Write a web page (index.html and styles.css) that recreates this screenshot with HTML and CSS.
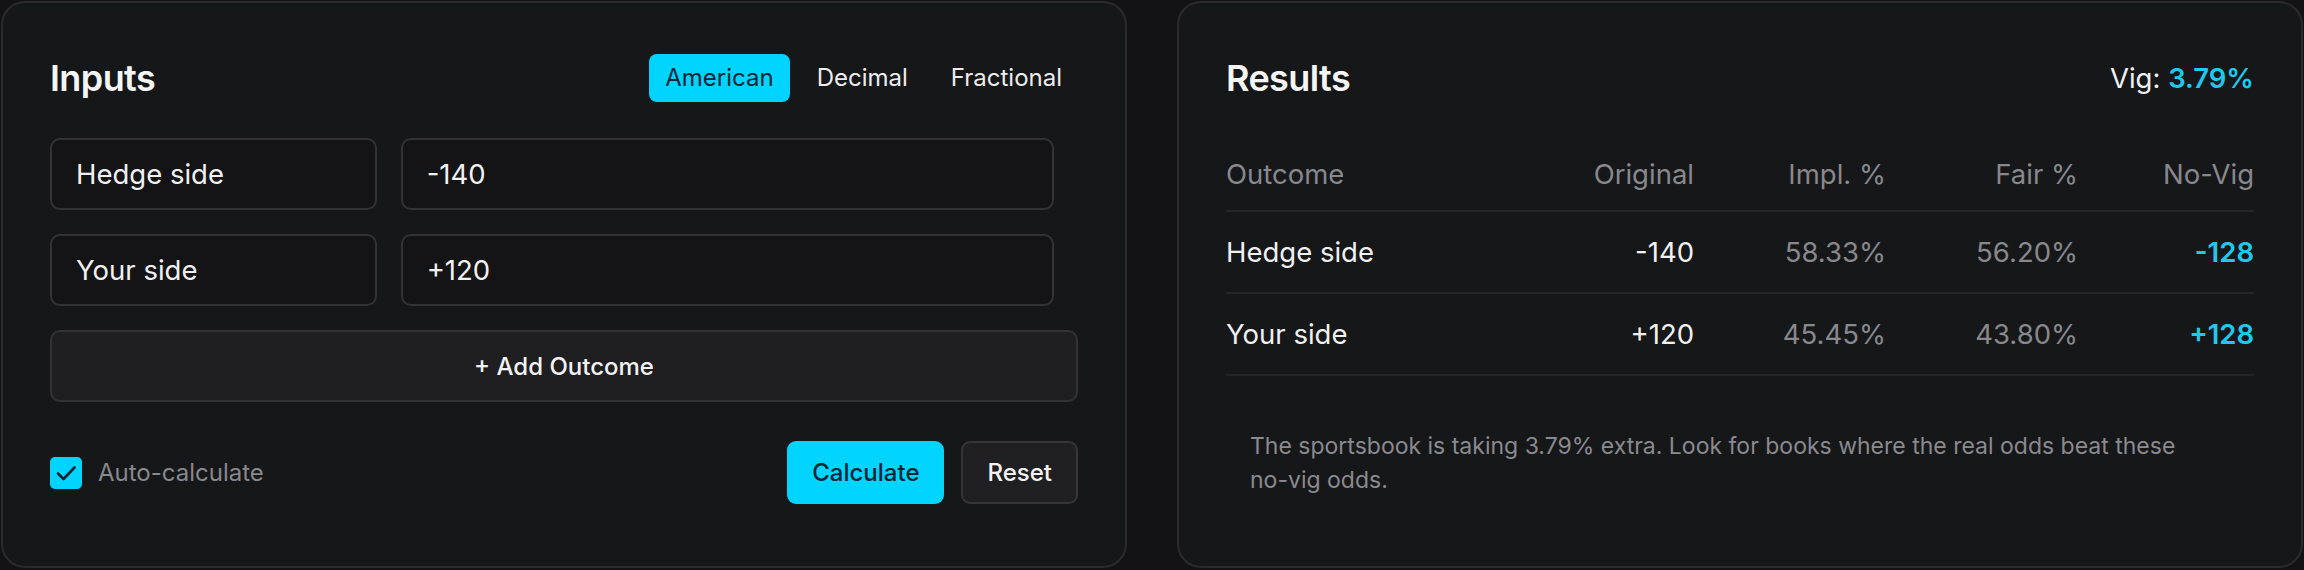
FILE: index.html
```html
<!DOCTYPE html>
<html lang="en">
<head>
<meta charset="utf-8">
<title>No-Vig Calculator</title>
<link rel="stylesheet" href="styles.css">
</head>
<body>
<main class="page">
  <section class="card inputs">
    <div class="card-head">
      <h2 class="title">Inputs</h2>
      <div class="toggle">
        <button class="tog active">American</button>
        <button class="tog">Decimal</button>
        <button class="tog">Fractional</button>
      </div>
    </div>
    <div class="rows">
      <div class="field">Hedge side</div>
      <div class="field">-140</div>
      <div class="field">Your side</div>
      <div class="field">+120</div>
    </div>
    <button class="add">+ Add Outcome</button>
    <div class="foot">
      <label class="auto">
        <svg class="check" width="32" height="32" viewBox="0 0 32 32"><rect x="0" y="0" width="32" height="32" rx="5" fill="#00d4ff"/><path d="M8 16.5 L13.5 22 L24.5 10.5" fill="none" stroke="#0b2230" stroke-width="2.6" stroke-linecap="round" stroke-linejoin="round"/></svg>
        <span>Auto-calculate</span>
      </label>
      <div class="actions">
        <button class="btn primary">Calculate</button>
        <button class="btn ghost">Reset</button>
      </div>
    </div>
  </section>
  <section class="card results">
    <div class="card-head">
      <h2 class="title">Results</h2>
      <div class="vig">Vig: <span class="vig-val">3.79%</span></div>
    </div>
    <div class="table">
      <div class="trow thead">
        <div>Outcome</div><div class="num">Original</div><div class="num">Impl. %</div><div class="num">Fair %</div><div class="num">No-Vig</div>
      </div>
      <div class="trow">
        <div class="name">Hedge side</div><div class="num orig">-140</div><div class="num dim">58.33%</div><div class="num dim">56.20%</div><div class="num hl">-128</div>
      </div>
      <div class="trow">
        <div class="name">Your side</div><div class="num orig">+120</div><div class="num dim">45.45%</div><div class="num dim">43.80%</div><div class="num hl">+128</div>
      </div>
    </div>
    <p class="note">The sportsbook is taking 3.79% extra. Look for books where the real odds beat these <span class="nowrap">no-vig</span> odds.</p>
  </section>
</main>
</body>
</html>
```

FILE: styles.css
```css
* { box-sizing: border-box; }
html, body { margin: 0; padding: 0; }
body {
  background: #131315;
  font-family: Inter, "Noto Sans", sans-serif;
  color: #f1f1f2;
  width: 2304px;
  height: 570px;
  overflow: hidden;
}
.page {
  display: grid;
  grid-template-columns: 1126px 1126px;
  column-gap: 50px;
  padding: 1px 0 0 1px;
}
.card {
  height: 567px;
  background: #161719;
  border: 2px solid #2b2b2e;
  border-radius: 24px;
  padding: 51px 47px 0 47px;
}
.card-head {
  display: flex;
  justify-content: space-between;
  align-items: center;
  height: 48px;
}
.title {
  margin: 0;
  font-size: 36px;
  line-height: 48px;
  font-weight: 600;
  letter-spacing: -0.6px;
  color: #f5f5f6;
}
.toggle { display: flex; gap: 11px; }
.tog {
  font-family: inherit;
  font-size: 24px;
  line-height: 48px;
  height: 48px;
  padding: 0 16px;
  border: 0;
  border-radius: 8px;
  background: transparent;
  color: #ededee;
}
.tog.active { background: #00d4ff; color: #0b2633; }
.rows {
  margin-top: 36px;
  display: grid;
  grid-template-columns: 1fr 2fr;
  gap: 24px;
  padding-right: 24px;
}
.field {
  height: 72px;
  border: 2px solid #333336;
  border-radius: 10px;
  background: #141416;
  padding: 0 24px;
  font-size: 27.5px;
  line-height: 68px;
  color: #f1f1f2;
}
.add {
  display: block;
  width: 100%;
  margin-top: 24px;
  height: 72px;
  border: 2px solid #333336;
  border-radius: 10px;
  background: #1f1f22;
  color: #f3f3f4;
  font-family: inherit;
  font-size: 24px;
  font-weight: 500;
}
.foot {
  margin-top: 39px;
  display: flex;
  justify-content: space-between;
  align-items: center;
}
.auto { display: flex; align-items: center; gap: 16px; font-size: 24px; color: #88888d; }
.check { display: block; }
.actions { display: flex; gap: 17px; }
.btn {
  font-family: inherit;
  font-size: 24px;
  font-weight: 500;
  height: 63px;
  padding: 0 24px;
  border-radius: 9px;
}
.btn.primary { background: #00d4ff; color: #0a2431; border: 0; padding: 0 25px; }
.btn.ghost { background: #202023; color: #f3f3f4; border: 2px solid #363639; }
.vig { font-size: 27.5px; color: #f1f1f2; }
.vig-val { color: #1ec8ee; font-weight: 600; }
.table { margin-top: 52px; }
.trow {
  display: grid;
  grid-template-columns: 1fr 192px 192px 192px 176px;
  font-size: 27.5px;
  line-height: 40px;
  padding: 20px 0;
  border-bottom: 2px solid #252528;
}
.trow.thead { padding: 0 0 16px; color: #88888d; }
.num { text-align: right; }
.name, .orig { color: #f1f1f2; }
.dim { color: #88888d; }
.hl { color: #1ec8ee; font-weight: 600; }
.note {
  margin: 30px 0 0;
  padding: 24px;
  font-size: 23px;
  line-height: 33.75px;
  color: #8a8a8f;
}
.nowrap { white-space: nowrap; }
```
